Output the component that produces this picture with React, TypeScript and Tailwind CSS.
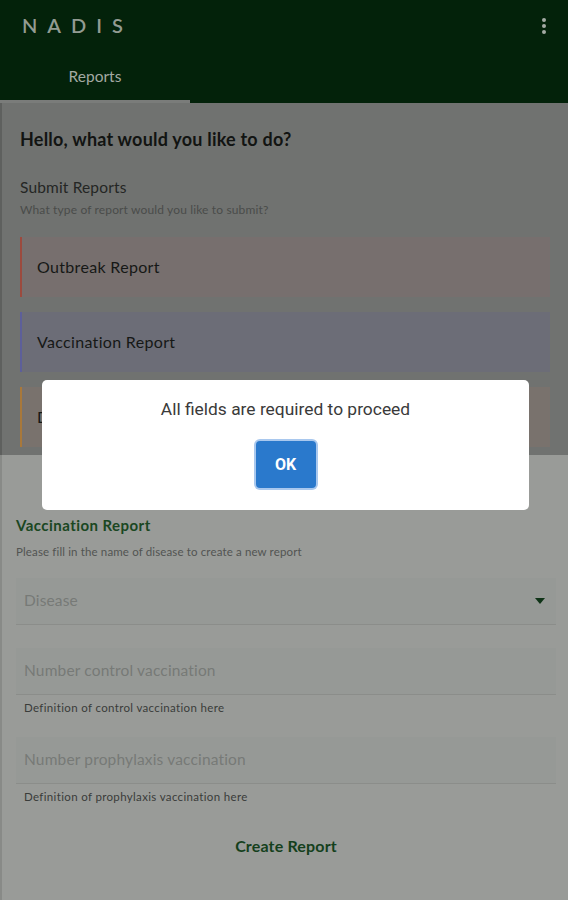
import React from 'react';

const reportTypes = [
  { label: 'Outbreak Report', bg: 'bg-[#776f6e]', border: 'border-[#9c4a3e]' },
  { label: 'Vaccination Report', bg: 'bg-[#6c6d77]', border: 'border-[#5d5f9a]' },
  { label: 'Disease Report', bg: 'bg-[#79726d]', border: 'border-[#a9783a]' },
];

function Field({ placeholder, hint, withArrow }: { placeholder: string; hint?: string; withArrow?: boolean }) {
  return (
    <div>
      <div className="flex h-[47px] items-center justify-between border-b border-[#8b8d8a] bg-[#969996] pl-2 pr-2">
        <span className="text-[15.5px] tracking-[0.01em] text-[#777a77]">{placeholder}</span>
        {withArrow && (
          <svg width="12" height="8" viewBox="0 0 12 8" className="mr-[2px]">
            <path d="M1 1 L11 1 L6 7 Z" fill="#0f3317" />
          </svg>
        )}
      </div>
      {hint && <p className="mt-[6px] pl-2 text-[11.5px] leading-[14px] tracking-[0.03em] text-[#3a3c3a]">{hint}</p>}
    </div>
  );
}

export default function App() {
  return (
    <div className="relative h-[900px] w-[568px] overflow-hidden bg-[#707270] font-['Lato','Liberation_Sans',sans-serif]">
      {/* app bar */}
      <header className="bg-[#03220a]">
        <div className="flex h-[50px] items-center justify-between pl-[22px] pr-[22px]">
          <span className="text-[20px] font-semibold tracking-[0.5em] text-[#929b92]">NADIS</span>
          <div className="flex flex-col gap-[2px] pt-[1px]">
            <span className="h-[4px] w-[4px] rounded-full bg-[#a4aba4]" />
            <span className="h-[4px] w-[4px] rounded-full bg-[#a4aba4]" />
            <span className="h-[4px] w-[4px] rounded-full bg-[#a4aba4]" />
          </div>
        </div>
        <div className="flex h-[53px]">
          <div className="flex w-[190px] flex-col">
            <div className="flex flex-1 items-center justify-center pt-[3px] text-[15.5px] text-[#a3aaa3]">Reports</div>
            <div className="h-[3px] bg-[#7a7c7a]" />
          </div>
        </div>
      </header>

      {/* main page, dimmed */}
      <main className="h-[352px] overflow-hidden border-l-2 border-[#5e605e] pl-[18px] pr-[18px] pt-[24px]">
        <h1 className="text-[18px] font-bold leading-[24px] tracking-[0.012em] text-[#121412]">
          Hello, what would you like to do?
        </h1>
        <h2 className="mt-[26px] text-[15.5px] leading-[20px] tracking-[0.01em] text-[#242624]">Submit Reports</h2>
        <p className="mt-[5px] text-[12px] leading-[16px] tracking-[0.012em] text-[#4a4c4a]">
          What type of report would you like to submit?
        </p>
        <div className="mt-[19px] flex flex-col gap-[15px]">
          {reportTypes.map((r) => (
            <div key={r.label} className={`flex h-[60px] items-center border-l-2 pl-[15px] ${r.bg} ${r.border}`}>
              <span className="text-[16px] tracking-[0.02em] text-[#161816]">{r.label}</span>
            </div>
          ))}
        </div>
      </main>

      {/* bottom sheet, dimmed */}
      <section className="h-[445px] border-l-2 border-[#888a87] bg-[#999b98] pl-[14px] pr-[12px] pt-[60px]">
        <h3 className="text-[15px] font-bold leading-[20px] tracking-[0.03em] text-[#1a4722]">Vaccination Report</h3>
        <p className="mt-[10px] text-[11.5px] leading-[14px] tracking-[0.012em] text-[#525452]">
          Please fill in the name of disease to create a new report
        </p>
        <div className="mt-[19px]">
          <Field placeholder="Disease" withArrow />
        </div>
        <div className="mt-[23px]">
          <Field placeholder="Number control vaccination" hint="Definition of control vaccination here" />
        </div>
        <div className="mt-[22px]">
          <Field placeholder="Number prophylaxis vaccination" hint="Definition of prophylaxis vaccination here" />
        </div>
        <div className="mt-[32px] text-center text-[16px] font-bold leading-[20px] tracking-[0.01em] text-[#14401c]">
          Create Report
        </div>
      </section>

      {/* alert */}
      <div className="absolute left-[42px] top-[380px] flex h-[130px] w-[487px] flex-col items-center rounded-[5px] bg-white pt-[19px] font-['Roboto','Liberation_Sans',sans-serif]">
        <p className="text-[17.4px] leading-[20px] text-[#3a3a3a]">All fields are required to proceed</p>
        <button className="mt-[22px] flex h-[47px] w-[60px] items-center justify-center rounded-[4px] bg-[#2a79cc] text-[16px] font-bold text-white ring-2 ring-[#a9c8ee]">
          OK
        </button>
      </div>
    </div>
  );
}
